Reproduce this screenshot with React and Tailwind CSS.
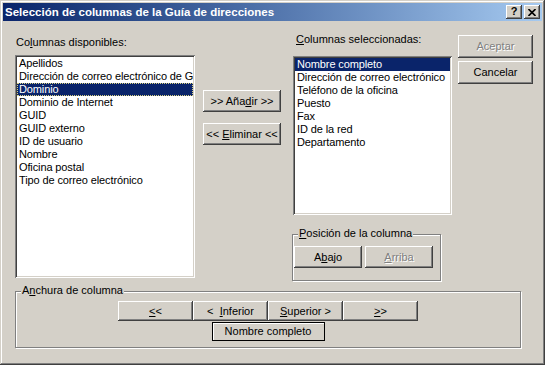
const raised =
  "shadow-[inset_-1px_-1px_0_#404040,inset_1px_1px_0_#ffffff,inset_-2px_-2px_0_#808080,inset_2px_2px_0_#d4d0c8]";
const sunken =
  "shadow-[inset_1px_1px_0_#808080,inset_-1px_-1px_0_#ffffff,inset_2px_2px_0_#404040,inset_-2px_-2px_0_#d4d0c8]";
const etched = "border border-[#808080] shadow-[inset_1px_1px_0_#ffffff,1px_1px_0_#ffffff]";
const disabledText = "text-[#808080] [text-shadow:1px_1px_0_#ffffff]";

function Button({ children, className = "", disabled }) {
  return (
    <div
      className={`flex items-center justify-center bg-[#d4d0c8] ${raised} ${
        disabled ? disabledText : "text-black"
      } ${className}`}
    >
      <span className="whitespace-pre">{children}</span>
    </div>
  );
}

function ListBox({ items, selected, focused, className = "" }) {
  return (
    <div className={`bg-white p-[2px] tracking-[-0.12px] ${sunken} ${className}`}>
      {items.map((item) => {
        const isSel = item === selected;
        return (
          <div
            key={item}
            className={`h-[13px] leading-[13px] px-[2px] whitespace-nowrap overflow-hidden ${
              isSel ? "bg-[#0a246a] text-white" : ""
            } ${isSel && focused ? "outline-1 outline-dotted outline-[#d8d080] -outline-offset-1" : ""}`}
          >
            {item}
          </div>
        );
      })}
    </div>
  );
}

function GroupBox({ label, className = "", children }) {
  return (
    <div className={`relative ${etched} ${className}`}>
      <span className="absolute top-[-8px] left-[5px] px-[1px] h-[13px] leading-[13px] bg-[#d4d0c8]">
        {label}
      </span>
      {children}
    </div>
  );
}

const available = [
  "Apellidos",
  "Dirección de correo electrónico de G",
  "Dominio",
  "Dominio de Internet",
  "GUID",
  "GUID externo",
  "ID de usuario",
  "Nombre",
  "Oficina postal",
  "Tipo de correo electrónico",
];

const chosen = [
  "Nombre completo",
  "Dirección de correo electrónico",
  "Teléfono de la oficina",
  "Puesto",
  "Fax",
  "ID de la red",
  "Departamento",
];

export default function App() {
  return (
    <div
      className={`w-[545px] h-[365px] bg-[#d4d0c8] p-[3px] text-[11px] leading-[13px] text-black font-['Liberation_Sans',Arial,sans-serif] shadow-[inset_-1px_-1px_0_#404040,inset_1px_1px_0_#d4d0c8,inset_-2px_-2px_0_#808080,inset_2px_2px_0_#ffffff]`}
    >
      {/* title bar */}
      <div className="h-[18px] flex items-center justify-between bg-linear-to-r from-[#0a246a] to-[#a6caf0] pl-[2px] pr-[2px]">
        <span className="text-white font-bold text-[11.5px]">Selección de columnas de la Guía de direcciones</span>
        <div className="flex gap-[2px]">
          <div className={`w-[16px] h-[14px] bg-[#d4d0c8] flex items-center justify-center ${raised}`}>
            <span className="font-bold text-[11px] leading-[11px] pb-[1px]">?</span>
          </div>
          <div className={`w-[16px] h-[14px] bg-[#d4d0c8] flex items-center justify-center ${raised}`}>
            <svg width="8" height="7" viewBox="0 0 8 7">
              <path d="M0.5 0 L7.5 7 M7.5 0 L0.5 7" stroke="#000" strokeWidth="1.6" />
            </svg>
          </div>
        </div>
      </div>

      {/* main area */}
      <div className="flex items-start pl-[12px] h-[262px]">
        <div className="w-[180px] mt-[15px]">
          <div className="h-[13px] pl-[1px]">
            Co<u>l</u>umnas disponibles:
          </div>
          <ListBox items={available} selected="Dominio" focused className="mt-[6px] h-[223px]" />
        </div>

        <div className="w-[78px] ml-[8px] mt-[69px] flex flex-col gap-[11px]">
          <Button className="h-[22px]">
            {">> Aña"}<u>d</u>{"ir >>"}
          </Button>
          <Button className="h-[22px]">
            {"<< "}<u>E</u>{"liminar <<"}
          </Button>
        </div>

        <div className="w-[159px] ml-[12px] mt-[12px]">
          <div className="h-[13px] pl-[3px]">
            <u>C</u>olumnas seleccionadas:
          </div>
          <ListBox items={chosen} selected="Nombre completo" className="mt-[10px] h-[159px]" />
          <GroupBox label={<><u>P</u>osición de la columna</>} className="mt-[19px] -ml-[1px] w-[149px] h-[47px]">
            <div className="flex gap-[3px] pt-[11px] pl-[1px]">
              <Button className="w-[68px] h-[22px]">
                A<u>b</u>ajo
              </Button>
              <Button className="w-[68px] h-[22px]" disabled>
                <u>A</u>rriba
              </Button>
            </div>
          </GroupBox>
        </div>

        <div className="w-[75px] ml-[6px] mt-[14px] flex flex-col gap-[3px]">
          <Button className="h-[23px]" disabled>
            Aceptar
          </Button>
          <Button className="h-[23px]">Cancelar</Button>
        </div>
      </div>

      {/* column width */}
      <GroupBox label={<>A<u>n</u>chura de columna</>} className="ml-[12px] mt-[8px] w-[506px] h-[57px]">
        <div className="flex flex-col items-center pt-[9px]">
          <div className="flex">
            <Button className="w-[75px] h-[20px]">
              <u>&lt;</u>&lt;
            </Button>
            <Button className="w-[75px] h-[20px]">
              {"<  "}<u>I</u>{"nferior"}
            </Button>
            <Button className="w-[75px] h-[20px]">
              <u>S</u>{"uperior >"}
            </Button>
            <Button className="w-[75px] h-[20px]">
              <u>&gt;</u>&gt;
            </Button>
          </div>
          <div className="mt-[1px] w-[113px] h-[19px] border border-black shadow-[inset_1px_1px_0_#ffffff] flex items-center justify-center">
            Nombre completo
          </div>
        </div>
      </GroupBox>
    </div>
  );
}
